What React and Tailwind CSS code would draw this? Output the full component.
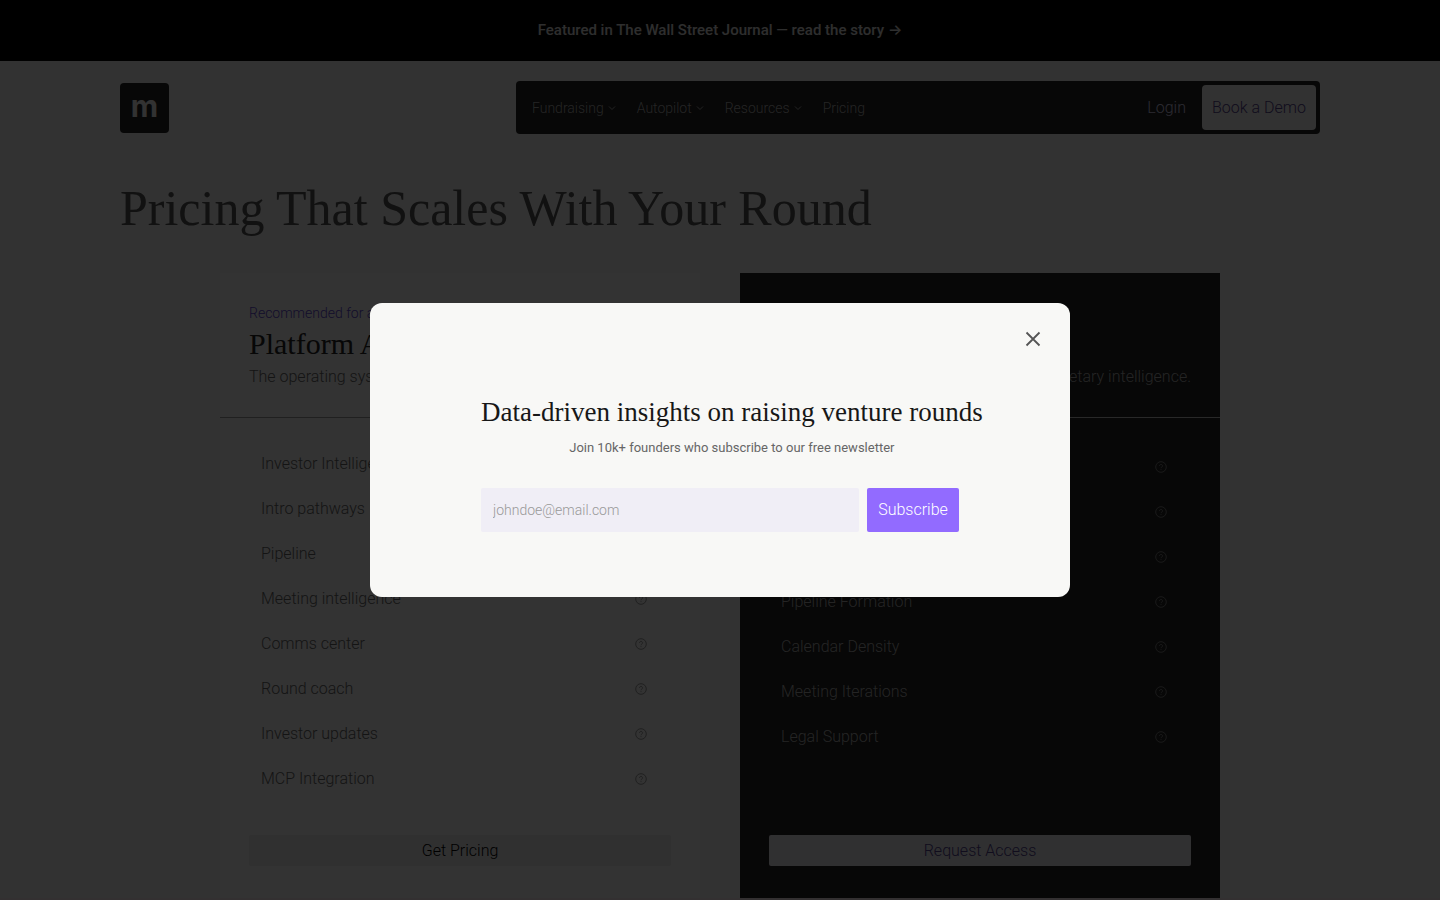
/**
 * App.jsx — Pricing page with newsletter dialog
 */
import React from 'react'

const NAV = [
  { label: 'Fundraising', menu: true },
  { label: 'Autopilot', menu: true },
  { label: 'Resources', menu: true },
  { label: 'Pricing', menu: false },
]

const PLATFORM_FEATURES = [
  'Investor Intelligence',
  'Intro pathways',
  'Pipeline',
  'Meeting intelligence',
  'Comms center',
  'Round coach',
  'Investor updates',
  'MCP Integration',
]

const AUTOPILOT_FEATURES = [
  'Strategy',
  'Targeting',
  'Outreach',
  'Pipeline Formation',
  'Calendar Density',
  'Meeting Iterations',
  'Legal Support',
]

function Chevron() {
  return (
    <svg className="h-2 w-2" viewBox="0 0 8 8" fill="none" stroke="currentColor" aria-hidden="true">
      <path d="M1 2.5 4 5.5 7 2.5" />
    </svg>
  )
}

function HelpIcon() {
  return (
    <svg className="h-3 w-3" viewBox="0 0 12 12" fill="none" stroke="currentColor" strokeWidth="0.9" aria-hidden="true">
      <circle cx="6" cy="6" r="5.3" />
      <path d="M4.5 4.8a1.5 1.5 0 1 1 2.2 1.4c-.5.3-.7.5-.7 1" />
      <path d="M6 8.2v.9" />
    </svg>
  )
}

function Banner() {
  return (
    <a href="#story" className="flex h-[61px] items-center justify-center gap-1 bg-black text-[15px] font-medium text-[#e4e4e4]">
      Featured in The Wall Street Journal — read the story
      <span className="font-['Inter']">→</span>
    </a>
  )
}

function Header() {
  return (
    <header className="mx-auto flex max-w-[1200px] items-center justify-between pt-5">
      <a href="#home" aria-label="Home" className="flex h-[50px] w-[49px] items-center justify-center rounded bg-[#232323]">
        <span className="pb-1 font-['Inter'] text-3xl leading-9 font-bold text-[#f8f8f8]">m</span>
      </a>
      <nav className="flex w-[67%] items-center justify-between rounded bg-[#232323] p-1 text-sm text-[#b4b4b4]">
        <ul className="flex items-center gap-[21px] pl-3">
          {NAV.map(item => (
            <li key={item.label}>
              {item.menu
                ? <button type="button" className="flex items-center gap-1">{item.label}<Chevron /></button>
                : <a href="#pricing">{item.label}</a>}
            </li>
          ))}
        </ul>
        <div className="flex items-center gap-1 text-base">
          <a href="#login" className="px-3 py-2 text-[#d8d2f0]">Login</a>
          <a href="#demo" className="flex h-[45px] w-[114px] items-center justify-center rounded bg-[#f8f8f8] text-[#54428f]">Book a Demo</a>
        </div>
      </nav>
    </header>
  )
}

function Feature({ label }) {
  return (
    <li className="flex h-[45px] items-center justify-between pr-6 pl-3">
      <span>{label}</span>
      <button type="button" aria-label={`About ${label}`} className="opacity-70"><HelpIcon /></button>
    </li>
  )
}

function PlatformCard() {
  return (
    <article className="flex flex-1 flex-col bg-[#fdfdfd]">
      <div className="h-[145px] border-b border-[#a0a0a0] px-[29px] pt-[30px] text-[#666]">
        <p className="text-sm leading-5 text-[#6247d6]">Recommended for all founders</p>
        <h2 className="font-['Liberation_Serif',serif] text-3xl leading-[42px] text-[#232323]">Platform Access</h2>
        <p className="leading-6">The operating system for your round.</p>
      </div>
      <ul className="px-[29px] pt-[23px] text-[#666]">
        {PLATFORM_FEATURES.map(f => <Feature key={f} label={f} />)}
      </ul>
      <div className="mt-auto px-[29px] pb-8">
        <button type="button" className="h-[31px] w-full rounded-xs bg-[#efefef] pt-px text-black">Get Pricing</button>
      </div>
    </article>
  )
}

function AutopilotCard() {
  return (
    <article className="flex flex-1 flex-col bg-[#232323]">
      <div className="h-[145px] border-b border-[#c8c8c8] px-[29px] pt-[30px] text-[#b4b4b4]">
        <p className="text-sm leading-5">By application</p>
        <h2 className="font-['Liberation_Serif',serif] text-3xl leading-[42px] text-[#f8f8f8]">Autopilot</h2>
        <p className="text-right leading-6 whitespace-nowrap">A managed raise, run on our proprietary intelligence.</p>
      </div>
      <ul className="px-[29px] pt-[26px] text-[#b4b4b4]">
        {AUTOPILOT_FEATURES.map(f => <Feature key={f} label={f} />)}
      </ul>
      <div className="mt-auto px-[29px] pb-8">
        <button type="button" className="h-[31px] w-full rounded-xs bg-[#f0eef6] pt-px text-[#54428f]">Request Access</button>
      </div>
    </article>
  )
}

function NewsletterDialog() {
  return (
    <div className="fixed inset-0 flex items-center justify-center bg-black/80">
      <div role="dialog" aria-modal="true" aria-labelledby="newsletter-title" className="relative h-[294px] w-[700px] rounded-xl bg-[#f8f8f6] px-[111px] pt-[89px]">
        <button type="button" aria-label="Close" className="absolute top-[23px] right-6 flex h-[26px] w-[26px] items-center justify-center text-[#555]">
          <svg className="h-4 w-4" viewBox="0 0 16 16" fill="none" stroke="currentColor" strokeWidth="1.8" aria-hidden="true">
            <path d="M1.5 1.5 14.5 14.5M14.5 1.5 1.5 14.5" />
          </svg>
        </button>
        <div className="w-max text-center">
          <h2 id="newsletter-title" className="font-['Liberation_Serif',serif] text-[27px] leading-10 text-[#171717]">
            Data-driven insights on raising venture rounds
          </h2>
          <p className="text-[13px] leading-8 font-normal text-[#666]">Join 10k+ founders who subscribe to our free newsletter</p>
        </div>
        <form className="flex gap-2 pt-6">
          <input type="email" aria-label="Email" placeholder="johndoe@email.com" className="h-[44px] min-w-0 flex-1 rounded-xs bg-[#f0eef6] px-3 text-sm placeholder:text-[#999]" />
          <button type="button" className="h-[44px] w-[92px] rounded-xs bg-[#926bff] text-white">Subscribe</button>
        </form>
      </div>
    </div>
  )
}

export default function App() {
  return (
    <div className="h-screen overflow-hidden bg-[#f8f8f8] font-['Roboto',sans-serif] text-base font-light">
      <Banner />
      <Header />
      <main>
        <h1 className="mx-auto max-w-[1200px] pt-[41px] font-['Liberation_Serif',serif] text-[50px] leading-[66px] text-[#555]">
          Pricing That Scales With Your Round
        </h1>
        <section className="mx-auto mt-8 flex h-[625px] max-w-[1000px] gap-10">
          <PlatformCard />
          <AutopilotCard />
        </section>
        <div className="h-20 bg-[#ffeef2]" />
      </main>
      <NewsletterDialog />
    </div>
  )
}
